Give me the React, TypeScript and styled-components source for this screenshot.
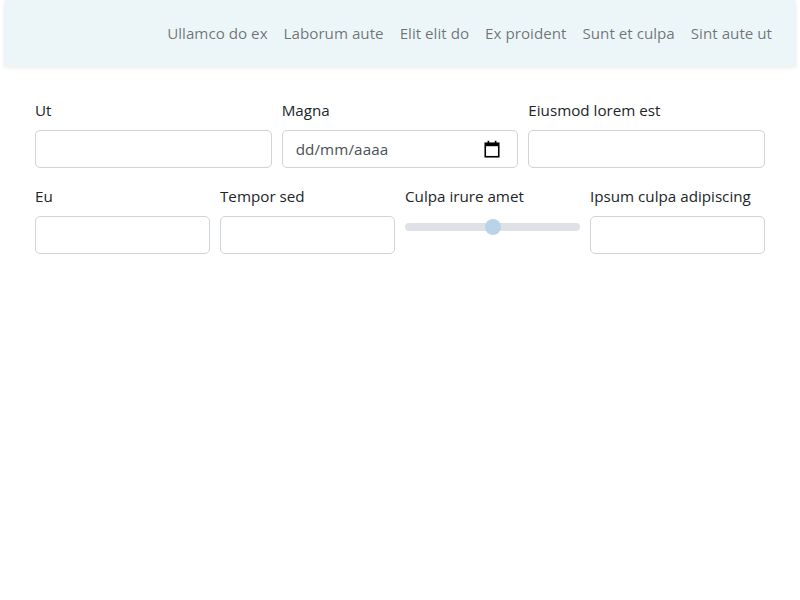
import React from "react";
import styled, { createGlobalStyle } from "styled-components";

const GlobalStyle = createGlobalStyle`
  html, body { margin: 0; padding: 0; background: #fff; }
  body {
    font-family: "Open Sans", "Noto Sans", sans-serif;
    font-size: 15.2px;
    line-height: 24px;
    color: #212529;
  }
  * { box-sizing: border-box; }
`;

const Navbar = styled.nav`
  margin: 0 4px;
  height: 66px;
  background: #ecf6f9;
  box-shadow: 0 2px 4px rgba(0, 0, 0, 0.075);
  display: flex;
  align-items: center;
  justify-content: flex-end;
  padding: 0 16px;
`;

const NavList = styled.ul`
  list-style: none;
  margin: 0;
  padding: 0;
  display: flex;
`;

const NavLink = styled.a`
  display: block;
  padding: 8px 8px;
  color: rgba(0, 0, 0, 0.55);
  text-decoration: none;
  line-height: 24px;
`;

const Main = styled.main`
  padding: 32px 35px 0;
  display: flex;
  flex-direction: column;
  gap: 16px;
`;

const Row = styled.div<{ $cols: number }>`
  display: grid;
  grid-template-columns: repeat(${(p) => p.$cols}, 1fr);
  column-gap: 10px;
`;

const Field = styled.div`
  display: flex;
  flex-direction: column;
  min-width: 0;
`;

const Label = styled.label`
  display: block;
  margin-bottom: 8px;
  line-height: 24px;
  color: #212529;
`;

const TextInput = styled.input`
  display: block;
  width: 100%;
  height: 38px;
  padding: 6px 12px;
  font: inherit;
  color: #212529;
  background: #fff;
  border: 1px solid #ced4da;
  border-radius: 5px;
  outline: none;
`;

const DateBox = styled.div`
  display: flex;
  align-items: center;
  justify-content: space-between;
  height: 38px;
  padding: 0 17px 0 13px;
  border: 1px solid #ced4da;
  border-radius: 5px;
  background: #fff;
  color: #495057;
`;

const DateText = styled.span`
  letter-spacing: 0.1px;
`;

const Range = styled.input`
  -webkit-appearance: none;
  appearance: none;
  width: 100%;
  height: 22px;
  margin: 0;
  padding: 0;
  background: transparent;

  &::-webkit-slider-runnable-track {
    height: 8px;
    border-radius: 4px;
    background: #dee2e6;
  }
  &::-webkit-slider-thumb {
    -webkit-appearance: none;
    appearance: none;
    width: 16px;
    height: 16px;
    margin-top: -4px;
    border: 0;
    border-radius: 50%;
    background: #b8d3ea;
  }
`;

const CalendarIcon = () => (
  <svg width="16" height="18" viewBox="0 0 16 18" aria-hidden="true">
    <rect x="1.25" y="3.25" width="13.5" height="13.5" fill="none" stroke="#000" strokeWidth="1.6" />
    <rect x="1" y="3" width="14" height="3.2" fill="#000" />
    <rect x="3.6" y="0.8" width="1.6" height="3" fill="#000" />
    <rect x="10.8" y="0.8" width="1.6" height="3" fill="#000" />
  </svg>
);

const links = ["Ullamco do ex", "Laborum aute", "Elit elit do", "Ex proident", "Sunt et culpa", "Sint aute ut"];

export default function App() {
  return (
    <>
      <GlobalStyle />
      <Navbar>
        <NavList>
          {links.map((l) => (
            <li key={l}>
              <NavLink href="#">{l}</NavLink>
            </li>
          ))}
        </NavList>
      </Navbar>
      <Main>
        <Row $cols={3}>
          <Field>
            <Label>Ut</Label>
            <TextInput type="text" />
          </Field>
          <Field>
            <Label>Magna</Label>
            <DateBox>
              <DateText>dd/mm/aaaa</DateText>
              <CalendarIcon />
            </DateBox>
          </Field>
          <Field>
            <Label>Eiusmod lorem est</Label>
            <TextInput type="text" />
          </Field>
        </Row>
        <Row $cols={4}>
          <Field>
            <Label>Eu</Label>
            <TextInput type="text" />
          </Field>
          <Field>
            <Label>Tempor sed</Label>
            <TextInput type="text" />
          </Field>
          <Field>
            <Label>Culpa irure amet</Label>
            <Range type="range" min={0} max={100} defaultValue={50} />
          </Field>
          <Field>
            <Label>Ipsum culpa adipiscing</Label>
            <TextInput type="text" />
          </Field>
        </Row>
      </Main>
    </>
  );
}
